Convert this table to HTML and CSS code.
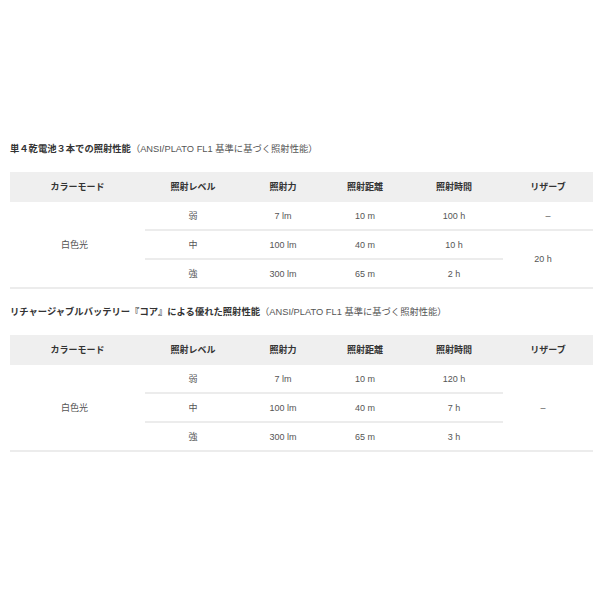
FILE: index.html
```html
<!DOCTYPE html>
<html lang="ja">
<head>
<meta charset="utf-8">
<link rel="stylesheet" href="styles.css">
</head>
<body>
<div class="page">
  <h2 class="title"><strong>単４乾電池３本での照射性能</strong><span class="note">（ANSI/PLATO FL1 基準に基づく照射性能）</span></h2>
  <table class="spec">
    <colgroup>
      <col class="c1"><col class="c2"><col class="c3"><col class="c4"><col class="c5"><col class="c6">
    </colgroup>
    <thead>
      <tr><th>カラーモード</th><th>照射レベル</th><th>照射力</th><th>照射距離</th><th>照射時間</th><th>リザーブ</th></tr>
    </thead>
    <tbody>
      <tr><td rowspan="3" class="mode">白色光</td><td>弱</td><td>7 lm</td><td>10 m</td><td>100 h</td><td>–</td></tr>
      <tr><td>中</td><td>100 lm</td><td>40 m</td><td>10 h</td><td rowspan="2" class="reserve">20 h</td></tr>
      <tr class="last"><td>強</td><td>300 lm</td><td>65 m</td><td>2 h</td></tr>
    </tbody>
  </table>

  <h2 class="title"><strong>リチャージャブルバッテリー『コア』による優れた照射性能</strong><span class="note">（ANSI/PLATO FL1 基準に基づく照射性能）</span></h2>
  <table class="spec">
    <colgroup>
      <col class="c1"><col class="c2"><col class="c3"><col class="c4"><col class="c5"><col class="c6">
    </colgroup>
    <thead>
      <tr><th>カラーモード</th><th>照射レベル</th><th>照射力</th><th>照射距離</th><th>照射時間</th><th>リザーブ</th></tr>
    </thead>
    <tbody>
      <tr><td rowspan="3" class="mode">白色光</td><td>弱</td><td>7 lm</td><td>10 m</td><td>120 h</td><td rowspan="3" class="reserve">–</td></tr>
      <tr><td>中</td><td>100 lm</td><td>40 m</td><td>7 h</td></tr>
      <tr class="last"><td>強</td><td>300 lm</td><td>65 m</td><td>3 h</td></tr>
    </tbody>
  </table>
</div>
</body>
</html>
```
FILE: styles.css
```css
html, body {
  margin: 0;
  padding: 0;
  background: #ffffff;
}

.page {
  padding: 142px 7px 0 10px;
  font-family: "Liberation Sans", "Noto Sans CJK JP", sans-serif;
}

.title {
  margin: 0 0 16px 0;
  font-size: 9.3px;
  line-height: 14px;
  height: 14px;
  font-weight: normal;
  color: #444;
  white-space: nowrap;
}

.title strong {
  font-weight: bold;
  color: #333;
}

.title .note {
  color: #555;
}

.spec {
  width: 583px;
  border-collapse: collapse;
  table-layout: fixed;
  margin: 0 0 16px 0;
  font-size: 9px;
  color: #555;
}

.c1 { width: 135px; }
.c2 { width: 96px; }
.c3 { width: 84px; }
.c4 { width: 80px; }
.c5 { width: 98px; }
.c6 { width: 90px; }

.spec th {
  background: #efefef;
  color: #333;
  font-weight: bold;
  height: 30px;
  padding: 0;
  text-align: center;
  vertical-align: middle;
  line-height: 12px;
}

.spec td {
  height: 27px;
  padding: 0;
  text-align: center;
  vertical-align: middle;
  line-height: 12px;
  border-bottom: 2px solid #ececec;
}

.spec td.mode {
  padding-right: 6px;
}

.spec td.reserve {
  padding-right: 10px;
}
```
